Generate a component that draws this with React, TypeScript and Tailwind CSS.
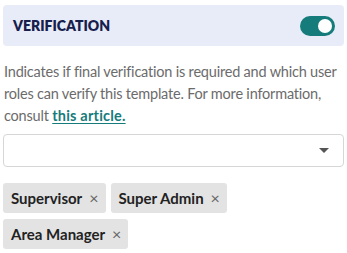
import React from "react";

const roles = ["Supervisor", "Super Admin", "Area Manager"];

export default function App() {
  return (
    <div className="w-[347px] h-[253px] bg-white px-[3px] pt-[5px] font-['Lato',sans-serif]">
      <div className="flex h-[41px] items-center justify-between rounded-[4px] bg-[#e8ecf8] pl-[10px] pr-[9px]">
        <span className="text-[14px] font-extrabold text-[#17204d]">VERIFICATION</span>
        <button className="relative h-[20px] w-[35px] rounded-full bg-[#167b7b]">
          <span className="absolute right-[3px] top-[3px] h-[14px] w-[14px] rounded-full bg-white" />
        </button>
      </div>
      <p className="mt-[15px] pl-[1px] text-[14.5px] tracking-[-0.2px] leading-[22px] text-[#6b6b6b]">
        Indicates if final verification is required and which user roles can verify this template. For more information, consult{" "}
        <a href="#" className="font-bold tracking-[0.2px] text-[#167b7b] underline underline-offset-2">this article.</a>
      </p>
      <div className="mt-[7px] flex h-[33px] items-center justify-end rounded-[4px] border border-[#d6d6d6] pr-[14px]">
        <span className="h-0 w-0 border-x-[5px] border-t-[5px] border-x-transparent border-t-[#555]" />
      </div>
      <div className="mt-[16px] flex flex-wrap gap-x-[5px] gap-y-[6px]">
        {roles.map((r) => (
          <span key={r} className="flex h-[30px] items-center gap-[7px] rounded-[3px] bg-[#e3e3e3] pl-[8px] pr-[7px]">
            <span className="text-[15px] font-bold text-[#222]">{r}</span>
            <span className="text-[16px] text-[#666]">×</span>
          </span>
        ))}
      </div>
    </div>
  );
}
